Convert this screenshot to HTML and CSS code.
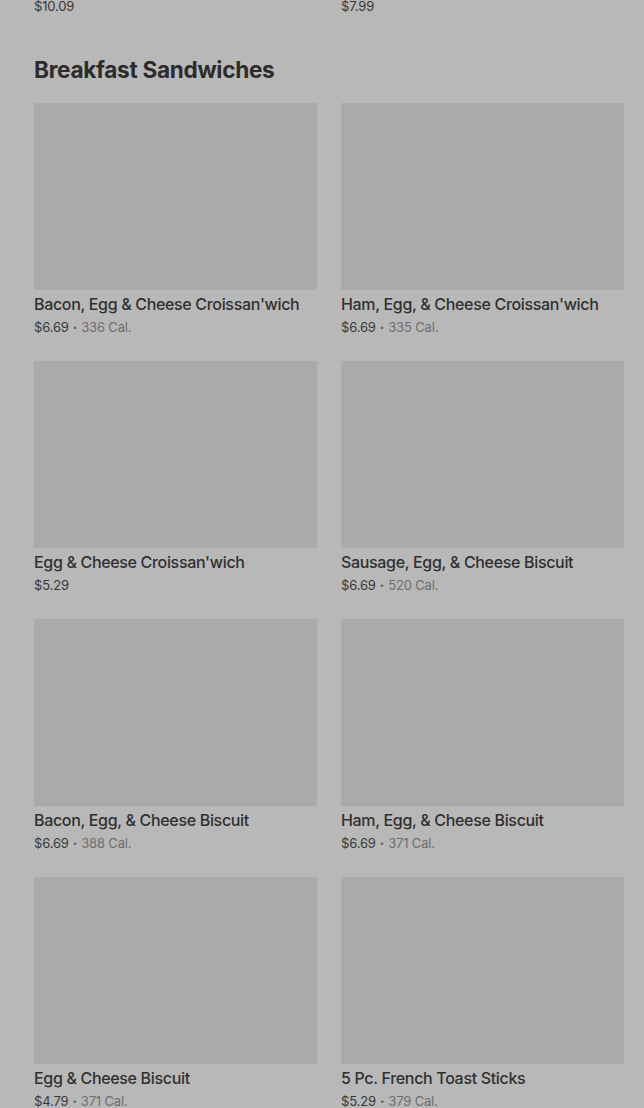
FILE: index.html
```
<html>
<head>
    <title>Breakfast Sandwiches</title>
    <link rel="stylesheet" href="styles.css">
</head>
<body>
<div class="page">
    <div class="prev-row">
        <div class="price-line"><span class="price">$10.09</span></div>
        <div class="price-line"><span class="price">$7.99</span></div>
    </div>

    <h2 class="section-title">Breakfast Sandwiches</h2>

    <div class="grid">
        <div class="card">
            <div class="thumb"></div>
            <div class="name">Bacon, Egg &amp; Cheese Croissan'wich</div>
            <div class="price-line"><span class="price">$6.69</span><span class="dot">•</span><span class="cal">336 Cal.</span></div>
        </div>
        <div class="card">
            <div class="thumb"></div>
            <div class="name">Ham, Egg, &amp; Cheese Croissan'wich</div>
            <div class="price-line"><span class="price">$6.69</span><span class="dot">•</span><span class="cal">335 Cal.</span></div>
        </div>
        <div class="card">
            <div class="thumb"></div>
            <div class="name">Egg &amp; Cheese Croissan'wich</div>
            <div class="price-line"><span class="price">$5.29</span></div>
        </div>
        <div class="card">
            <div class="thumb"></div>
            <div class="name">Sausage, Egg, &amp; Cheese Biscuit</div>
            <div class="price-line"><span class="price">$6.69</span><span class="dot">•</span><span class="cal">520 Cal.</span></div>
        </div>
        <div class="card">
            <div class="thumb"></div>
            <div class="name">Bacon, Egg, &amp; Cheese Biscuit</div>
            <div class="price-line"><span class="price">$6.69</span><span class="dot">•</span><span class="cal">388 Cal.</span></div>
        </div>
        <div class="card">
            <div class="thumb"></div>
            <div class="name">Ham, Egg, &amp; Cheese Biscuit</div>
            <div class="price-line"><span class="price">$6.69</span><span class="dot">•</span><span class="cal">371 Cal.</span></div>
        </div>
        <div class="card">
            <div class="thumb"></div>
            <div class="name">Egg &amp; Cheese Biscuit</div>
            <div class="price-line"><span class="price">$4.79</span><span class="dot">•</span><span class="cal">371 Cal.</span></div>
        </div>
        <div class="card">
            <div class="thumb"></div>
            <div class="name">5 Pc. French Toast Sticks</div>
            <div class="price-line"><span class="price">$5.29</span><span class="dot">•</span><span class="cal">379 Cal.</span></div>
        </div>
    </div>
</div>
</body>
</html>
```
FILE: styles.css
```
body {
    margin: 0;
    background-color: rgb(184, 184, 184);
    font-family: Inter, "Noto Sans", sans-serif;
    color: rgb(48, 48, 48);
    overflow: hidden;
}

.page {
    padding: 0 20px 0 34px;
}

.prev-row {
    display: grid;
    grid-template-columns: 1fr 1fr;
    gap: 24px;
    margin-top: -2px;
}

.section-title {
    margin: 42px 0 0 0;
    font-size: 22.6px;
    line-height: 28px;
    font-weight: 700;
    letter-spacing: -0.3px;
    color: rgb(44, 44, 44);
}

.grid {
    display: grid;
    grid-template-columns: 1fr 1fr;
    column-gap: 24px;
    row-gap: 24px;
    margin-top: 19px;
}

.card {
    height: 234px;
}

.thumb {
    height: 187px;
    background-color: rgb(170, 170, 170);
}

.name {
    margin-top: 4px;
    font-size: 16px;
    line-height: 20px;
    font-weight: 500;
    letter-spacing: -0.33px;
    white-space: nowrap;
}

.price-line {
    margin-top: 5px;
    font-size: 13px;
    line-height: 16px;
    letter-spacing: -0.15px;
}

.prev-row .price-line {
    margin-top: 0;
}

.price {
    color: rgb(56, 56, 56);
}

.dot {
    margin: 0 4px;
    font-size: 8px;
    vertical-align: 2px;
    color: rgb(100, 100, 100);
}

.cal {
    color: rgb(110, 110, 110);
}
```
